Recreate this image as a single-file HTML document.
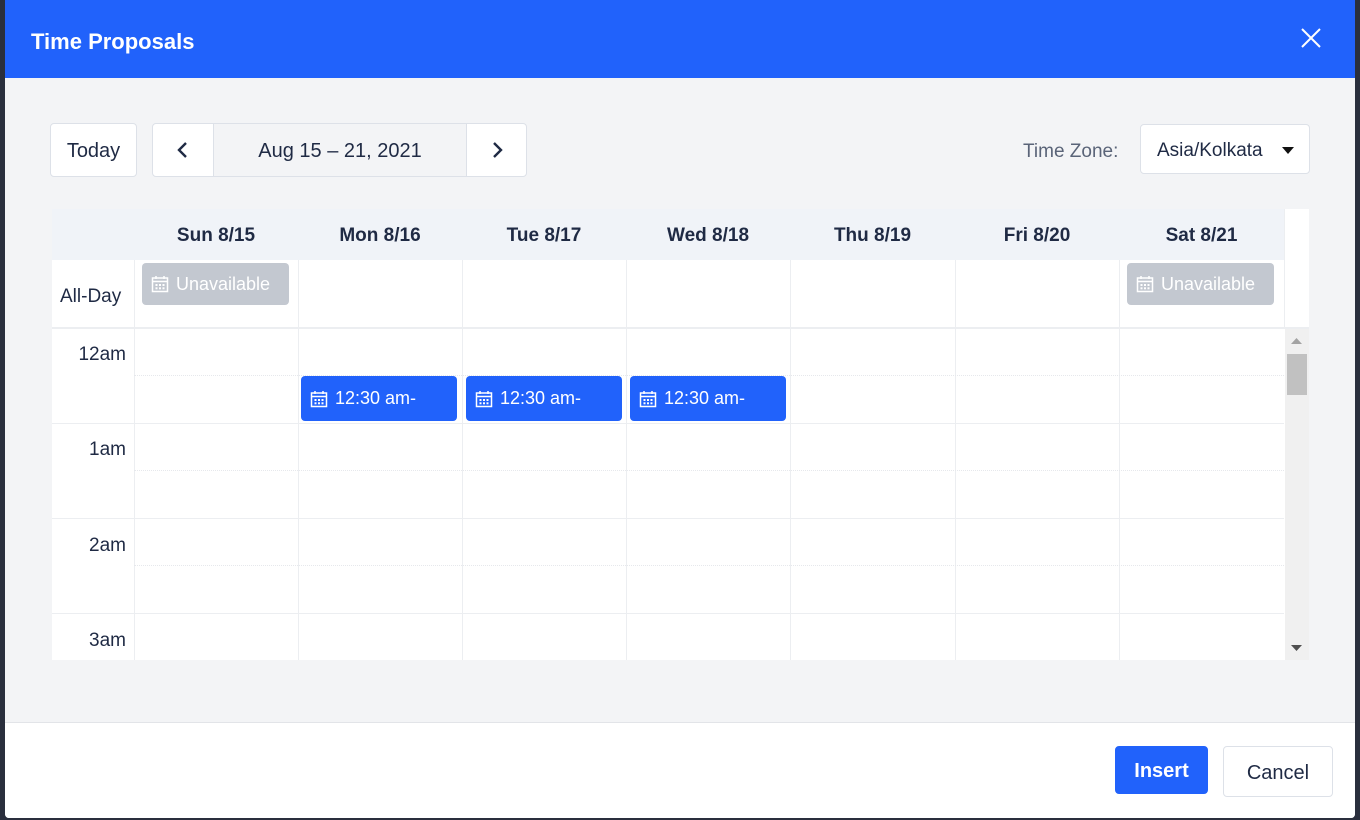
<!DOCTYPE html>
<html><head><meta charset="utf-8"><style>
*{box-sizing:border-box;margin:0;padding:0}
body{width:1360px;height:820px;background:#2a2f3d;font-family:"Liberation Sans",sans-serif;position:relative;overflow:hidden;color:#1f2a44}
.modal{position:absolute;left:5px;top:0;width:1350px;height:818px;background:#f3f4f6;border-radius:0 0 4px 4px;overflow:hidden}
.hdr{position:absolute;left:0;top:0;width:100%;height:78px;background:#2162fb;color:#fff}
.hdr h1{position:absolute;left:26px;top:29px;font-size:22px;font-weight:bold}
.btn{position:absolute;background:#fff;border:1px solid #dde1e8;border-radius:4px;display:flex;align-items:center;justify-content:center;font-size:20px;color:#1f2a44;padding-top:3px}
.a{position:absolute}
.grid{position:absolute;left:47px;top:209px;width:1257px;height:451px;background:#fff}
.hd{position:absolute;top:0;height:51px;background:#f0f3f8;font-size:19px;font-weight:bold;color:#1f2a44;text-align:center;line-height:54px}
.vl{position:absolute;width:1px;background:#eceef1}
.hl{position:absolute;height:1px;background:#eceef1}
.dl{position:absolute;height:0;border-top:1px dotted #e6e8ec}
.tm{position:absolute;right:0;font-size:19px;color:#1f2a44}
.ev{position:absolute;height:45px;width:156px;background:#2162fb;border-radius:4px;color:#fff;font-size:18px;display:flex;align-items:center;padding-left:9px}
.un{position:absolute;height:42px;width:147px;background:#c3c8d0;border-radius:4px;color:#fff;font-size:18px;display:flex;align-items:center;padding-left:9px}
.ic{margin-right:7px}
.foot{position:absolute;left:0;top:722px;width:100%;height:96px;background:#fff;border-top:1px solid #e2e4e8}
</style></head><body>
<div class="modal">
<div class="hdr"><h1>Time Proposals</h1>
<svg class="a" style="left:1296px;top:28px" width="20" height="20" viewBox="0 0 20 20"><path d="M1 1L19 19M19 1L1 19" stroke="#fff" stroke-width="2"/></svg></div>

<div class="btn" style="left:45px;top:123px;width:87px;height:54px">Today</div>
<div class="btn" style="left:147px;top:123px;width:375px;height:54px;justify-content:flex-start;overflow:hidden;padding-top:0">
<div style="width:61px;height:100%;display:flex;align-items:center;justify-content:center;border-right:1px solid #dde1e8"><svg width="14" height="20" viewBox="0 0 14 20"><path d="M10 3L3 10L10 17" stroke="#1f2a44" stroke-width="2.4" fill="none"/></svg></div>
<div style="width:253px;height:100%;background:#f3f4f6;display:flex;align-items:center;justify-content:center;padding-top:3px">Aug 15 – 21, 2021</div>
<div style="width:60px;height:100%;display:flex;align-items:center;justify-content:center;border-left:1px solid #dde1e8"><svg width="14" height="20" viewBox="0 0 14 20"><path d="M4 3L11 10L4 17" stroke="#1f2a44" stroke-width="2.4" fill="none"/></svg></div>
</div>
<div class="a" style="left:1018px;top:141px;font-size:19px;color:#5a6478">Time Zone:</div>
<div class="btn" style="left:1135px;top:124px;width:170px;height:50px;justify-content:flex-start;padding-left:16px;font-size:19px">Asia/Kolkata<svg style="position:absolute;right:15px;top:22px" width="12" height="7"><path d="M0 0H12L6 7Z" fill="#111"/></svg></div>

<div class="grid">
<div class="hd" style="left:0;width:1232px"></div>
<div class="hd" style="left:82px;width:164px">Sun 8/15</div>
<div class="hd" style="left:246px;width:164px">Mon 8/16</div>
<div class="hd" style="left:410px;width:164px">Tue 8/17</div>
<div class="hd" style="left:574px;width:164px">Wed 8/18</div>
<div class="hd" style="left:738px;width:165px">Thu 8/19</div>
<div class="hd" style="left:903px;width:164px">Fri 8/20</div>
<div class="hd" style="left:1067px;width:165px">Sat 8/21</div>
<div class="vl" style="left:1232px;top:0;height:119px"></div>
<div class="vl" style="left:82px;top:51px;height:400px"></div>
<div class="vl" style="left:246px;top:51px;height:400px"></div>
<div class="vl" style="left:410px;top:51px;height:400px"></div>
<div class="vl" style="left:574px;top:51px;height:400px"></div>
<div class="vl" style="left:738px;top:51px;height:400px"></div>
<div class="vl" style="left:903px;top:51px;height:400px"></div>
<div class="vl" style="left:1067px;top:51px;height:400px"></div>
<div class="hl" style="left:0;top:118px;width:1257px;height:2px"></div>
<div class="dl" style="left:82px;top:166px;width:1150px"></div>
<div class="hl" style="left:0;top:214px;width:1232px"></div>
<div class="dl" style="left:82px;top:261px;width:1150px"></div>
<div class="hl" style="left:0;top:309px;width:1232px"></div>
<div class="dl" style="left:82px;top:356px;width:1150px"></div>
<div class="hl" style="left:0;top:404px;width:1232px"></div>
<div class="a" style="left:8px;top:77px;font-size:19px">All-Day</div>
<div class="tm" style="left:0;width:74px;top:135px;text-align:right">12am</div>
<div class="tm" style="left:0;width:74px;top:230px;text-align:right">1am</div>
<div class="tm" style="left:0;width:74px;top:326px;text-align:right">2am</div>
<div class="tm" style="left:0;width:74px;top:421px;text-align:right">3am</div>
<div class="a" style="left:1233px;top:120px;width:24px;height:331px;background:#f0f0f0">
<svg class="a" style="left:6px;top:9px" width="11" height="6"><path d="M0 6H11L5.5 0Z" fill="#a3a3a3"/></svg>
<div class="a" style="left:2px;top:25px;width:20px;height:41px;background:#c1c1c1"></div>
<svg class="a" style="left:6px;top:316px" width="11" height="6"><path d="M0 0H11L5.5 6Z" fill="#505050"/></svg>
</div>
</div>

<div class="un" style="left:137px;top:263px"><svg class="ic" width="18" height="18" viewBox="0 0 18 18"><rect x="1.5" y="3" width="15" height="13.5" fill="none" stroke="#fff" stroke-width="1.5"/><path d="M5 1v3M13 1v3M1.5 6.5h15" stroke="#fff" stroke-width="1.5"/><g fill="#fff"><rect x="4.5" y="9" width="2" height="2"/><rect x="8" y="9" width="2" height="2"/><rect x="11.5" y="9" width="2" height="2"/><rect x="4.5" y="12.3" width="2" height="2"/><rect x="8" y="12.3" width="2" height="2"/><rect x="11.5" y="12.3" width="2" height="2"/></g></svg>Unavailable</div>
<div class="un" style="left:1122px;top:263px"><svg class="ic" width="18" height="18" viewBox="0 0 18 18"><rect x="1.5" y="3" width="15" height="13.5" fill="none" stroke="#fff" stroke-width="1.5"/><path d="M5 1v3M13 1v3M1.5 6.5h15" stroke="#fff" stroke-width="1.5"/><g fill="#fff"><rect x="4.5" y="9" width="2" height="2"/><rect x="8" y="9" width="2" height="2"/><rect x="11.5" y="9" width="2" height="2"/><rect x="4.5" y="12.3" width="2" height="2"/><rect x="8" y="12.3" width="2" height="2"/><rect x="11.5" y="12.3" width="2" height="2"/></g></svg>Unavailable</div>
<div class="ev" style="left:296px;top:376px"><svg class="ic" width="18" height="18" viewBox="0 0 18 18"><rect x="1.5" y="3" width="15" height="13.5" fill="none" stroke="#fff" stroke-width="1.5"/><path d="M5 1v3M13 1v3M1.5 6.5h15" stroke="#fff" stroke-width="1.5"/><g fill="#fff"><rect x="4.5" y="9" width="2" height="2"/><rect x="8" y="9" width="2" height="2"/><rect x="11.5" y="9" width="2" height="2"/><rect x="4.5" y="12.3" width="2" height="2"/><rect x="8" y="12.3" width="2" height="2"/><rect x="11.5" y="12.3" width="2" height="2"/></g></svg>12:30 am-</div>
<div class="ev" style="left:461px;top:376px"><svg class="ic" width="18" height="18" viewBox="0 0 18 18"><rect x="1.5" y="3" width="15" height="13.5" fill="none" stroke="#fff" stroke-width="1.5"/><path d="M5 1v3M13 1v3M1.5 6.5h15" stroke="#fff" stroke-width="1.5"/><g fill="#fff"><rect x="4.5" y="9" width="2" height="2"/><rect x="8" y="9" width="2" height="2"/><rect x="11.5" y="9" width="2" height="2"/><rect x="4.5" y="12.3" width="2" height="2"/><rect x="8" y="12.3" width="2" height="2"/><rect x="11.5" y="12.3" width="2" height="2"/></g></svg>12:30 am-</div>
<div class="ev" style="left:625px;top:376px"><svg class="ic" width="18" height="18" viewBox="0 0 18 18"><rect x="1.5" y="3" width="15" height="13.5" fill="none" stroke="#fff" stroke-width="1.5"/><path d="M5 1v3M13 1v3M1.5 6.5h15" stroke="#fff" stroke-width="1.5"/><g fill="#fff"><rect x="4.5" y="9" width="2" height="2"/><rect x="8" y="9" width="2" height="2"/><rect x="11.5" y="9" width="2" height="2"/><rect x="4.5" y="12.3" width="2" height="2"/><rect x="8" y="12.3" width="2" height="2"/><rect x="11.5" y="12.3" width="2" height="2"/></g></svg>12:30 am-</div>

<div class="foot">
<div class="btn" style="left:1110px;top:23px;width:93px;height:48px;background:#2162fb;border-color:#2162fb;color:#fff;font-weight:bold">Insert</div>
<div class="btn" style="left:1218px;top:23px;width:110px;height:51px">Cancel</div>
</div>
</div>
</body></html>
